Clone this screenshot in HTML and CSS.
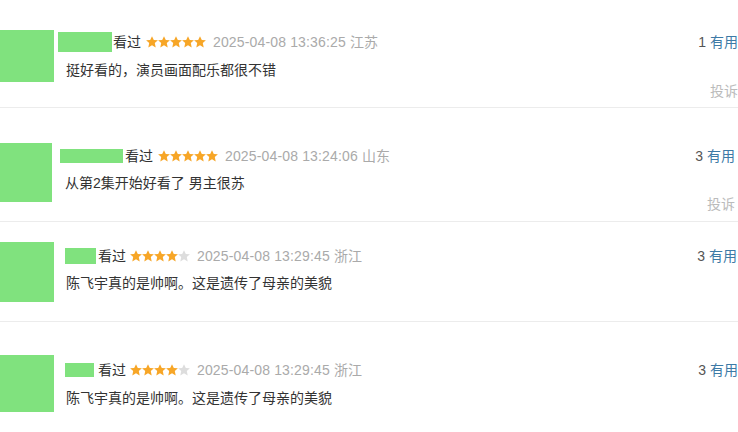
FILE: index.html
```html
<!DOCTYPE html>
<html lang="zh-CN">
<head>
  <meta charset="UTF-8" />
  <meta name="viewport" content="width=device-width, initial-scale=1.0" />
  <title>短评</title>
  <link rel="stylesheet" href="styles.css">
</head>
<body>
  <svg class="defs" width="0" height="0">
    <symbol id="star" viewBox="0 0 12 12">
      <polygon points="6,0.2 7.8,3.9 11.9,4.3 8.8,7.1 9.7,11.6 6,9.3 2.3,11.6 3.2,7.1 0.1,4.3 4.2,3.9" />
    </symbol>
  </svg>

  <div class="comments">
    <div class="comment c1">
      <div class="avatar"></div>
      <div class="main">
        <div class="head">
          <span class="name"></span>
          <span class="watched">看过</span>
          <svg class="stars" width="60" height="12" viewBox="0 0 60 12">
            <use href="#star" x="0" width="12" height="12" class="on" />
            <use href="#star" x="12" width="12" height="12" class="on" />
            <use href="#star" x="24" width="12" height="12" class="on" />
            <use href="#star" x="36" width="12" height="12" class="on" />
            <use href="#star" x="48" width="12" height="12" class="on" />
          </svg>
          <span class="time">2025-04-08 13:36:25 江苏</span>
          <span class="votes"><span class="count">1</span> <a class="useful">有用</a></span>
        </div>
        <p class="text">挺好看的，演员画面配乐都很不错</p>
        <div class="report">投诉</div>
      </div>
    </div>

    <div class="comment c2">
      <div class="avatar"></div>
      <div class="main">
        <div class="head">
          <span class="name"></span>
          <span class="watched">看过</span>
          <svg class="stars" width="60" height="12" viewBox="0 0 60 12">
            <use href="#star" x="0" width="12" height="12" class="on" />
            <use href="#star" x="12" width="12" height="12" class="on" />
            <use href="#star" x="24" width="12" height="12" class="on" />
            <use href="#star" x="36" width="12" height="12" class="on" />
            <use href="#star" x="48" width="12" height="12" class="on" />
          </svg>
          <span class="time">2025-04-08 13:24:06 山东</span>
          <span class="votes"><span class="count">3</span> <a class="useful">有用</a></span>
        </div>
        <p class="text">从第2集开始好看了 男主很苏</p>
        <div class="report">投诉</div>
      </div>
    </div>

    <div class="comment c3">
      <div class="avatar"></div>
      <div class="main">
        <div class="head">
          <span class="name"></span>
          <span class="watched">看过</span>
          <svg class="stars" width="60" height="12" viewBox="0 0 60 12">
            <use href="#star" x="0" width="12" height="12" class="on" />
            <use href="#star" x="12" width="12" height="12" class="on" />
            <use href="#star" x="24" width="12" height="12" class="on" />
            <use href="#star" x="36" width="12" height="12" class="on" />
            <use href="#star" x="48" width="12" height="12" class="off" />
          </svg>
          <span class="time">2025-04-08 13:29:45 浙江</span>
          <span class="votes"><span class="count">3</span> <a class="useful">有用</a></span>
        </div>
        <p class="text">陈飞宇真的是帅啊。这是遗传了母亲的美貌</p>
      </div>
    </div>

    <div class="comment c4">
      <div class="avatar"></div>
      <div class="main">
        <div class="head">
          <span class="name"></span>
          <span class="watched">看过</span>
          <svg class="stars" width="60" height="12" viewBox="0 0 60 12">
            <use href="#star" x="0" width="12" height="12" class="on" />
            <use href="#star" x="12" width="12" height="12" class="on" />
            <use href="#star" x="24" width="12" height="12" class="on" />
            <use href="#star" x="36" width="12" height="12" class="on" />
            <use href="#star" x="48" width="12" height="12" class="off" />
          </svg>
          <span class="time">2025-04-08 13:29:45 浙江</span>
          <span class="votes"><span class="count">3</span> <a class="useful">有用</a></span>
        </div>
        <p class="text">陈飞宇真的是帅啊。这是遗传了母亲的美貌</p>
      </div>
    </div>
  </div>
</body>
</html>
```

FILE: styles.css
```css
html, body {
  margin: 0;
  padding: 0;
  background-color: #fff;
  color: #333;
  font-family: "Liberation Sans", "Noto Sans CJK SC", sans-serif;
  font-size: 14px;
  overflow: hidden;
}

.defs {
  position: absolute;
}

.comment {
  display: flex;
  align-items: flex-start;
  box-sizing: border-box;
  height: var(--h);
  padding: var(--pt) var(--pr) 0 0;
  border-bottom: 1px solid #ececec;
}

.avatar {
  flex: none;
  width: var(--aw);
  height: var(--ah);
  background-color: #80e27e;
}

.main {
  flex: 1;
  margin-left: var(--gap);
  padding-top: var(--ht);
}

.head {
  display: flex;
  align-items: center;
  height: 20px;
  line-height: 20px;
  white-space: nowrap;
}

.name {
  width: var(--nw);
  height: var(--nh);
  margin-right: var(--ng);
  background-color: #80e27e;
}

.watched {
  color: #333;
}

.stars {
  margin: 0 7px 0 var(--sg);
}

.stars .on {
  fill: #f7a627;
}

.stars .off {
  fill: #ddd;
}

.time {
  color: #aaa;
  letter-spacing: 0.15px;
}

.votes {
  margin-left: auto;
  color: #555;
}

.useful {
  color: #3d7aa6;
  text-decoration: none;
}

.text {
  margin: var(--tm) 0 0 var(--ti);
  line-height: 20px;
}

.report {
  margin-top: 1px;
  text-align: right;
  line-height: 20px;
  color: #bbb;
}

.c1 {
  --h: 108px; --pt: 30px; --pr: 0px;
  --aw: 54px; --ah: 52px; --gap: 4px; --ht: 2px;
  --nw: 54px; --nh: 20px; --ng: 1px; --sg: 5px;
  --tm: 8px; --ti: 8px;
}

.c2 {
  --h: 114px; --pt: 35px; --pr: 3px;
  --aw: 52px; --ah: 59px; --gap: 8px; --ht: 3px;
  --nw: 63px; --nh: 14px; --ng: 2px; --sg: 5px;
  --tm: 7px; --ti: 5px;
}

.c3 {
  --h: 100px; --pt: 20px; --pr: 1px;
  --aw: 54px; --ah: 60px; --gap: 11px; --ht: 4px;
  --nw: 31px; --nh: 16px; --ng: 2px; --sg: 4px;
  --tm: 7px; --ti: 1px;
}

.c4 {
  --h: auto; --pt: 33px; --pr: 0px;
  --aw: 54px; --ah: 57px; --gap: 11px; --ht: 5px;
  --nw: 29px; --nh: 14px; --ng: 4px; --sg: 4px;
  --tm: 8px; --ti: 1px;
  border-bottom: none;
}
```
